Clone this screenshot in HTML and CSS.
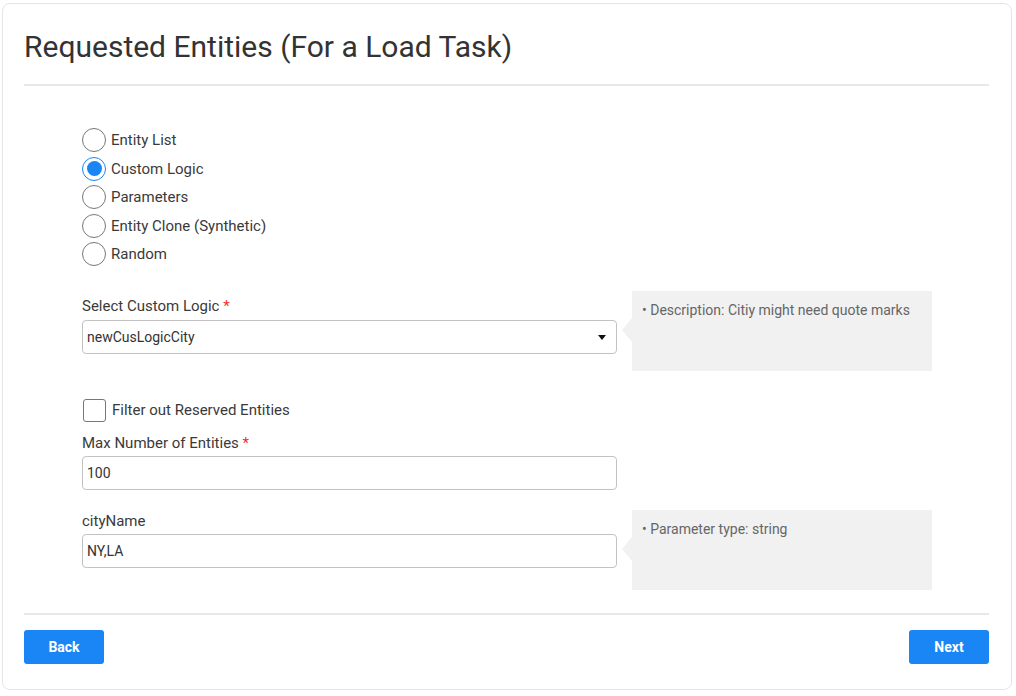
FILE: index.html
```html
<!DOCTYPE html>
<html lang="en">
<head>
<meta charset="utf-8">
<title>Requested Entities</title>
<link rel="stylesheet" href="styles.css">
</head>
<body>
<div class="card">
  <div class="card-header">
    <h1 class="title">Requested Entities (For a Load Task)</h1>
  </div>
  <div class="card-body">
    <div class="radio-group">
      <label class="radio-row"><span class="radio"></span><span class="radio-text">Entity List</span></label>
      <label class="radio-row"><span class="radio radio-checked"><span class="radio-dot"></span></span><span class="radio-text">Custom Logic</span></label>
      <label class="radio-row"><span class="radio"></span><span class="radio-text">Parameters</span></label>
      <label class="radio-row"><span class="radio"></span><span class="radio-text">Entity Clone (Synthetic)</span></label>
      <label class="radio-row"><span class="radio"></span><span class="radio-text">Random</span></label>
    </div>

    <div class="field-row field-row-first">
      <div class="field field-pad-5">
        <div class="field-label">Select Custom Logic <span class="req">*</span></div>
        <div class="select-box">
          <span class="select-value">newCusLogicCity</span>
          <span class="caret"></span>
        </div>
      </div>
      <div class="hint">
        <div class="hint-text">• Description: Citiy might need quote marks</div>
      </div>
    </div>

    <label class="check-row"><span class="checkbox"></span><span class="check-text">Filter out Reserved Entities</span></label>

    <div class="field field-max">
      <div class="field-label field-label-tight">Max Number of Entities <span class="req">*</span></div>
      <div class="input-box">100</div>
    </div>

    <div class="field-row field-row-second">
      <div class="field field-pad-1">
        <div class="field-label field-label-tight">cityName</div>
        <div class="input-box">NY,LA</div>
      </div>
      <div class="hint">
        <div class="hint-text">• Parameter type: string</div>
      </div>
    </div>
  </div>
  <div class="card-footer">
    <button class="btn">Back</button>
    <button class="btn">Next</button>
  </div>
</div>
</body>
</html>
```

FILE: styles.css
```css
html, body {
  margin: 0;
  padding: 0;
  background: #ffffff;
}

body {
  font-family: Roboto, "Liberation Sans", Arial, sans-serif;
  color: #3a3a3a;
  padding: 3px 0 0 2px;
}

.card {
  box-sizing: border-box;
  width: 1010px;
  height: 687px;
  border: 1px solid #e6e6e6;
  border-radius: 8px;
  padding: 0 22px 0 21px;
  background: #ffffff;
}

.card-header {
  padding-top: 26px;
  border-bottom: 2px solid #e8e8e8;
  padding-bottom: 20px;
}

.title {
  margin: 0;
  font-size: 30px;
  line-height: 34px;
  font-weight: 400;
  color: #333333;
}

.card-body {
  padding-left: 58px;
  padding-bottom: 23px;
  border-bottom: 2px solid #e8e8e8;
}

.radio-group {
  padding-top: 40px;
}

.radio-row {
  display: flex;
  align-items: center;
  height: 28.5px;
  gap: 5px;
}

.radio {
  box-sizing: border-box;
  width: 24px;
  height: 24px;
  border: 1px solid #777777;
  border-radius: 50%;
  display: flex;
  align-items: center;
  justify-content: center;
  background: #ffffff;
}

.radio-checked {
  border-color: #1a85f5;
}

.radio-dot {
  width: 15px;
  height: 15px;
  border-radius: 50%;
  background: #1a85f5;
}

.radio-text {
  font-size: 15px;
  line-height: 20px;
  color: #3a3a3a;
}

.field-row {
  display: grid;
  grid-template-columns: 535px 300px;
  column-gap: 15px;
  align-items: start;
}

.field-row-first {
  margin-top: 22.5px;
}

.field-row-second {
  margin-top: 20px;
}

.field-pad-5 {
  padding-top: 5px;
}

.field-pad-1 {
  padding-top: 1px;
}

.field-label {
  font-size: 15px;
  line-height: 20px;
  color: #3a3a3a;
  margin-bottom: 4px;
}

.field-label-tight {
  margin-bottom: 3px;
}

.req {
  color: #f0302a;
}

.select-box,
.input-box {
  box-sizing: border-box;
  width: 535px;
  height: 34px;
  border: 1px solid #c2c2c2;
  border-radius: 4px;
  display: flex;
  align-items: center;
  padding: 0 10px 0 4px;
  font-size: 14px;
  color: #333333;
}

.select-value {
  flex: 1;
}

.caret {
  width: 0;
  height: 0;
  border-left: 4.5px solid transparent;
  border-right: 4.5px solid transparent;
  border-top: 5px solid #111111;
  margin-top: 1px;
}

.hint {
  position: relative;
  height: 80px;
  background: #f1f1f1;
  box-sizing: border-box;
  padding: 10px 10px;
}

.hint::before {
  content: "";
  position: absolute;
  left: -10px;
  top: 27px;
  width: 0;
  height: 0;
  border-top: 12px solid transparent;
  border-bottom: 12px solid transparent;
  border-right: 10px solid #f1f1f1;
}

.hint-text {
  font-size: 14px;
  line-height: 18px;
  color: #666666;
}

.check-row {
  display: flex;
  align-items: center;
  gap: 6px;
  margin-top: 27px;
  height: 24px;
  padding-left: 1px;
}

.checkbox {
  box-sizing: border-box;
  width: 23px;
  height: 23px;
  border: 1px solid #777777;
  border-radius: 3px;
  background: #ffffff;
}

.check-text {
  font-size: 15px;
  line-height: 20px;
  color: #3a3a3a;
}

.field-max {
  margin-top: 11px;
}

.card-footer {
  display: flex;
  justify-content: space-between;
  padding-top: 15px;
}

.btn {
  width: 80px;
  height: 34px;
  border: none;
  border-radius: 3px;
  background: #1a85f5;
  color: #ffffff;
  font-family: Roboto, "Liberation Sans", Arial, sans-serif;
  font-size: 14px;
  font-weight: 700;
  padding: 0 0 1px 0;
  cursor: pointer;
}
```
